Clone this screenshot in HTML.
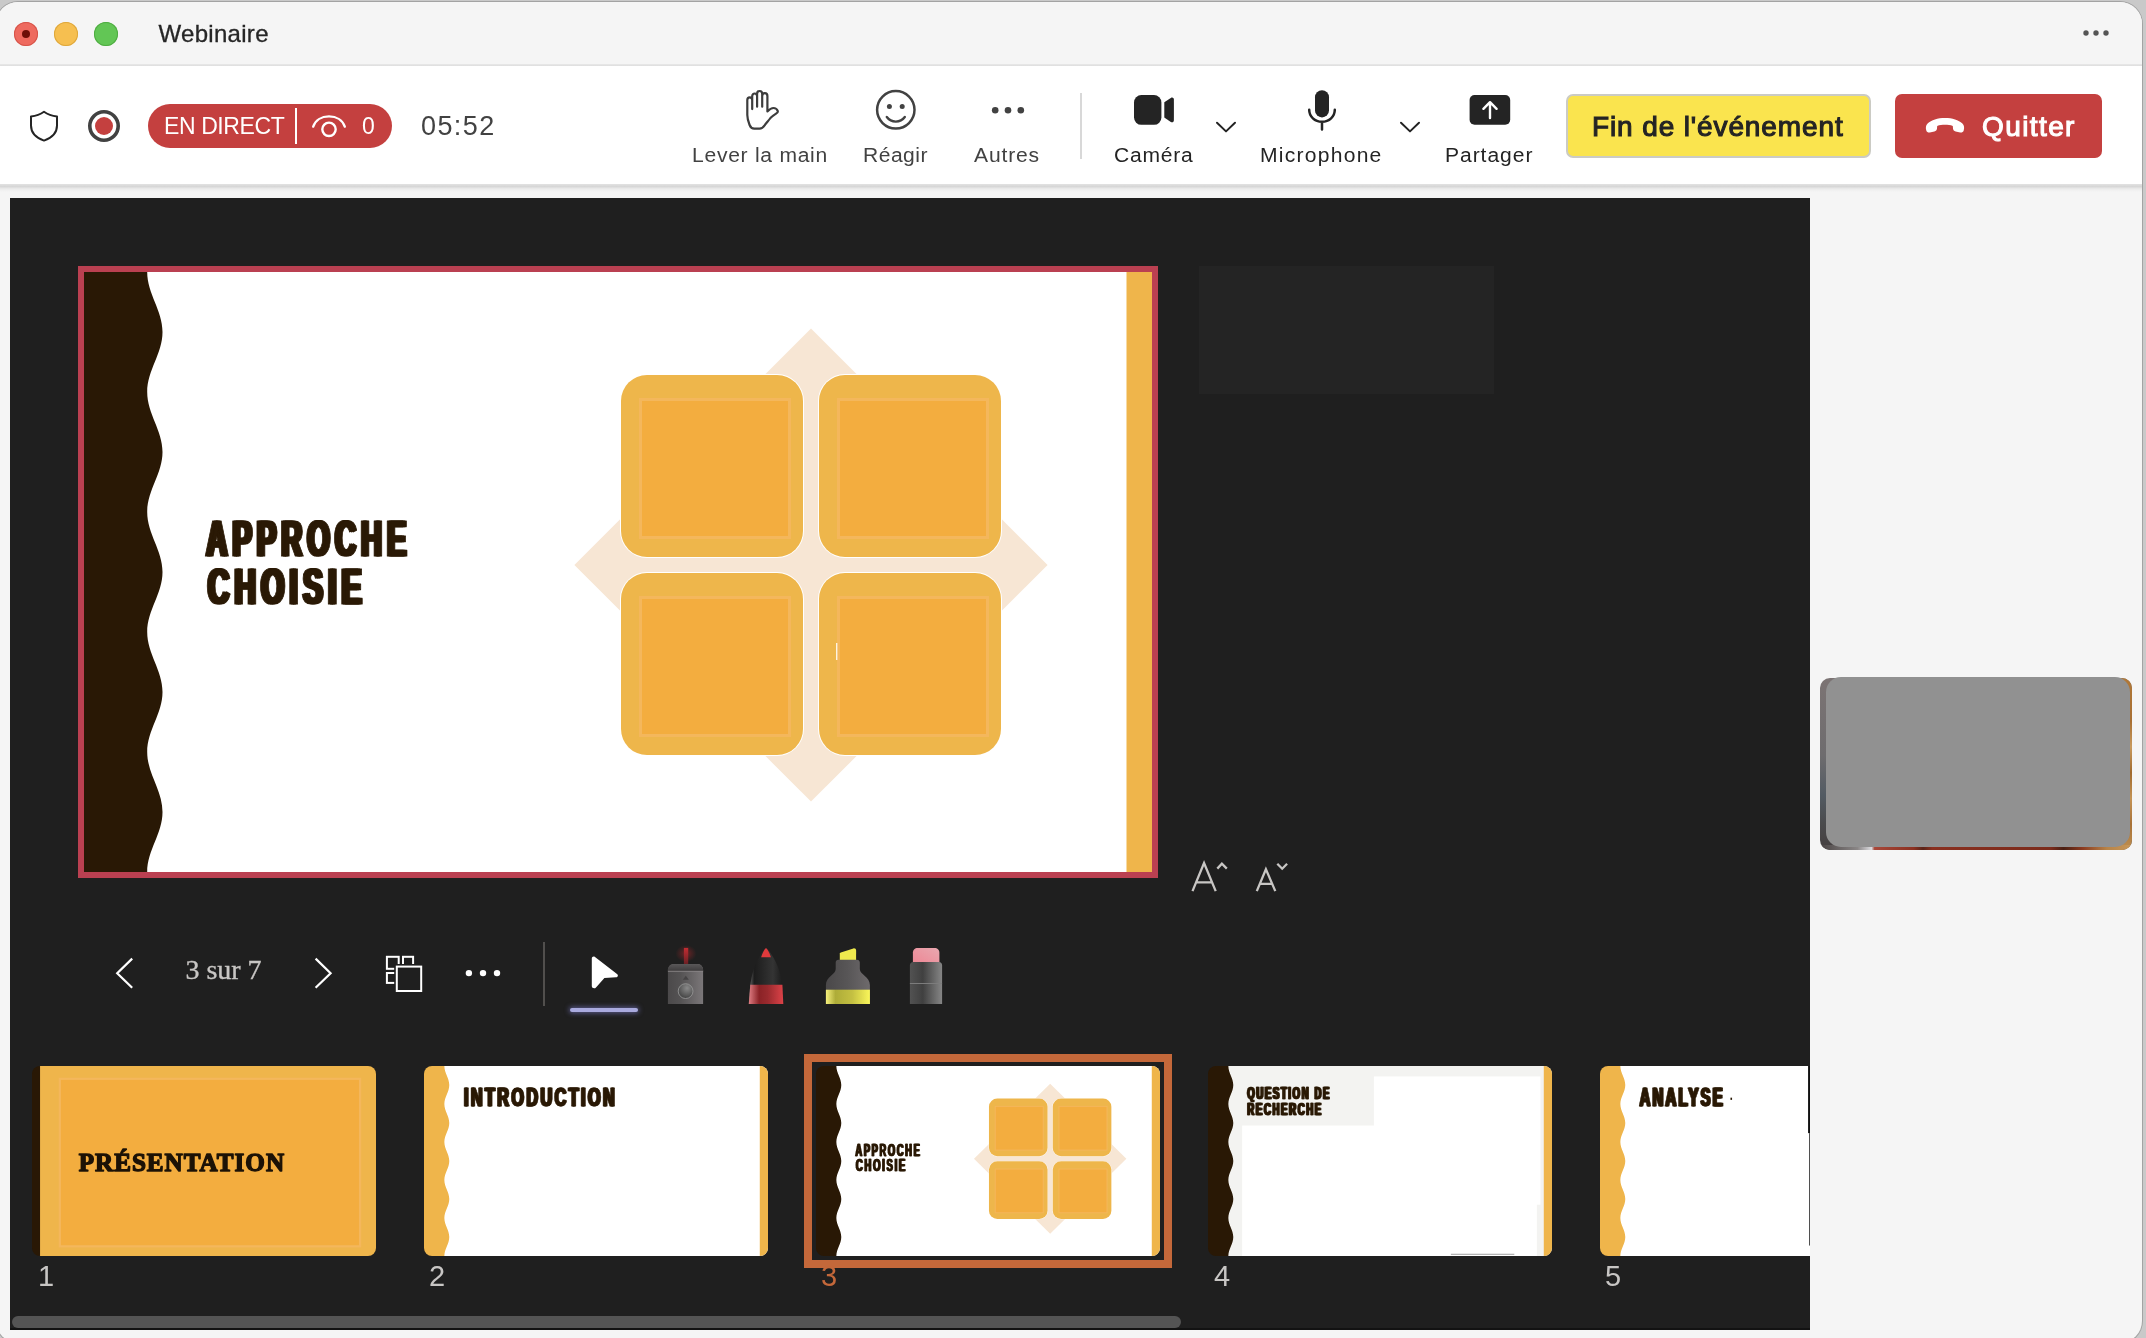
<!DOCTYPE html>
<html lang="fr">
<head>
<meta charset="utf-8">
<title>Webinaire</title>
<style>
*{box-sizing:border-box;margin:0;padding:0}
html,body{width:2146px;height:1338px;overflow:hidden;background:#c9c9c9}
body{font-family:"Liberation Sans",sans-serif;position:relative}
.abs{position:absolute}
#win{position:absolute;left:-4px;top:2px;width:2146px;height:1341px;background:#f5f5f5;border-radius:22px;overflow:hidden;box-shadow:0 0 0 1px #a3a3a3;will-change:transform}
#wi{position:absolute;left:4px;top:0;width:2142px;height:1341px}
/* coordinates inside #win are page y - 2 */
#titlebar{position:absolute;left:0;top:0;width:2142px;height:62px;background:#f5f5f5}
#tbsep{position:absolute;left:0;top:62px;width:2142px;height:2px;background:linear-gradient(#e9e9e9,#dedede)}
.tl{position:absolute;top:20px;width:24px;height:24px;border-radius:50%}
#title{position:absolute;left:158.5px;top:18px;font-size:24px;line-height:28px;color:#262626;letter-spacing:.3px;-webkit-text-stroke:.3px #262626;white-space:nowrap}
#toolbar{position:absolute;left:0;top:64px;width:2142px;height:118px;background:#fff}
#tbsh{position:absolute;left:0;top:182px;width:2142px;height:8px;background:linear-gradient(#e2e2e2 0,#dadada 22%,#d5d5d5 36%,#e2e2e2 46%,#ebebeb 62%,#f1f1f1 82%,#f5f5f5 100%)}
.lbl{position:absolute;top:141px;font-size:19.5px;line-height:24px;color:#424242;white-space:nowrap;transform-origin:0 50%;transform:scaleX(1.08)}
.lbl.dk{color:#242424}
#stage{position:absolute;left:10px;top:196px;width:1800px;height:1132px;background:#1f1f1f;overflow:hidden}
#si{position:absolute;left:0;top:-1px;width:1800px;height:1133px}
/* coordinates inside #stage are page x-10, page y-197 */
.num{position:absolute;top:1063px;font-size:29px;line-height:32px;color:#c8c6c4}
.thumb{position:absolute;top:869px;width:344px;height:190px;border-radius:8px;overflow:hidden}
.ico{position:absolute;overflow:visible}
</style>
</head>
<body>
<div id="win"><div id="wi">
  <div id="titlebar">
    <div class="tl" style="left:14px;background:#ee6a5f;box-shadow:inset 0 0 0 1px #d5544a"></div>
    <div class="abs" style="left:22px;top:28px;width:8px;height:8px;border-radius:50%;background:#6d0f08"></div>
    <div class="tl" style="left:54px;background:#f6bf50;box-shadow:inset 0 0 0 1px #dea73c"></div>
    <div class="tl" style="left:94px;background:#62c655;box-shadow:inset 0 0 0 1px #4fac42"></div>
    <div id="title">Webinaire</div>
    <svg class="ico" style="left:2078px;top:26px" width="36" height="10" viewBox="0 0 36 10"><circle cx="8" cy="5" r="2.7" fill="#555"/><circle cx="18" cy="5" r="2.7" fill="#555"/><circle cx="28" cy="5" r="2.7" fill="#555"/></svg>
  </div>
  <div id="tbsep"></div>
  <div id="toolbar"></div>
  <div id="tbsh"></div>
  <!--TB-START-->
  <!-- shield -->
  <svg class="ico" style="left:28px;top:106px" width="32" height="36" viewBox="0 0 32 36"><path d="M16 3.8 C12.2 6.6 7.8 8 3 8.4 V17.6 C3 24.8 8.2 30 16 32.6 C23.8 30 29 24.8 29 17.6 V8.4 C24.2 8 19.8 6.6 16 3.8 Z" fill="none" stroke="#242424" stroke-width="2" stroke-linejoin="round"/></svg>
  <!-- record -->
  <svg class="ico" style="left:86px;top:106px" width="36" height="36" viewBox="0 0 36 36"><circle cx="18" cy="18" r="14.2" fill="none" stroke="#424242" stroke-width="3.6"/><circle cx="18" cy="18" r="9" fill="#c4403f"/></svg>
  <!-- live pill -->
  <div class="abs" style="left:148px;top:102px;width:244px;height:44px;border-radius:22px;background:#c4403f"></div>
  <div class="abs" id="endirect" style="left:164px;top:110px;font-size:23px;line-height:28px;color:#fff;white-space:nowrap;letter-spacing:-.4px">EN DIRECT</div>
  <div class="abs" style="left:295px;top:106px;width:2px;height:36px;background:#fff"></div>
  <svg class="ico" style="left:310px;top:110px" width="38" height="28" viewBox="0 0 38 28"><path d="M3.2 14.6 C5.4 8.4 11.4 4.4 19 4.4 C26.6 4.4 32.6 8.4 34.8 14.6" fill="none" stroke="#fff" stroke-width="2.4" stroke-linecap="round"/><circle cx="19" cy="17.3" r="6.7" fill="none" stroke="#fff" stroke-width="2.4"/></svg>
  <div class="abs" id="viewers" style="left:362px;top:110px;font-size:23px;line-height:28px;color:#fff">0</div>
  <div class="abs" id="timer" style="left:421px;top:108px;font-size:27px;line-height:32px;color:#424242;white-space:nowrap;letter-spacing:1.4px">05:52</div>

  <!-- raise hand -->
  <svg class="ico" style="left:740px;top:84px" width="44" height="48" viewBox="0 0 44 48"><path d="M7.3 29 V14 C7.3 12.4 8.4 11.3 9.75 11.3 C11.1 11.3 12.2 12.4 12.2 14 V23.1 M12.2 14 V10.2 C12.2 8.6 13.3 7.5 14.65 7.5 C16 7.5 17.1 8.6 17.1 10.2 V20.7 M17.1 10.2 V7.7 C17.1 6.1 18.2 5 19.65 5 C21.1 5 22.2 6.1 22.2 7.7 V20.7 M22.2 10 C22.2 8.4 23.3 7.2 24.8 7.2 C26.3 7.2 27.4 8.4 27.4 10 V25.4 C29.6 23.2 31.4 22 33.4 22 C35.4 22 37 23 37.7 24.8 C38.2 26.2 37.4 26.8 36.4 27.4 C34 29 32 30.4 30.4 32.1 C28 35 26.4 37.2 25 38.8 C23.6 40.8 22.4 42.7 19.6 42.7 H14.2 C11.8 42.7 10.4 41 9.6 39 C8.4 36 7.3 33 7.3 29" fill="none" stroke="#3d3d3d" stroke-width="2.2" stroke-linecap="round" stroke-linejoin="round"/></svg>
  <div class="lbl" id="l1" style="left:692px;letter-spacing:0.68px">Lever la main</div>
  <!-- react -->
  <svg class="ico" style="left:873px;top:85px" width="46" height="46" viewBox="0 0 46 46"><circle cx="22.8" cy="22.8" r="18.7" fill="none" stroke="#424242" stroke-width="2.5"/><circle cx="16.4" cy="19.4" r="2.5" fill="#424242"/><circle cx="29.2" cy="19.4" r="2.5" fill="#424242"/><path d="M13.8 30 C16 33 19 34.6 22.8 34.6 C26.6 34.6 29.6 33 31.8 30" fill="none" stroke="#424242" stroke-width="2.4" stroke-linecap="round"/></svg>
  <div class="lbl" id="l2" style="left:863px;letter-spacing:0.46px">Réagir</div>
  <!-- more -->
  <svg class="ico" style="left:988px;top:101px" width="40" height="12" viewBox="0 0 40 12"><circle cx="7.2" cy="7.2" r="3.3" fill="#424242"/><circle cx="20" cy="7.2" r="3.3" fill="#424242"/><circle cx="32.8" cy="7.2" r="3.3" fill="#424242"/></svg>
  <div class="lbl" id="l3" style="left:974px;letter-spacing:0.79px">Autres</div>
  <!-- divider -->
  <div class="abs" style="left:1080px;top:91px;width:2px;height:66px;background:#d8d8d8"></div>
  <!-- camera -->
  <svg class="ico" style="left:1132px;top:91px" width="46" height="34" viewBox="0 0 46 34"><rect x="2" y="2" width="27.4" height="29.8" rx="7.4" fill="#242424"/><path d="M32.3 9.2 L38.8 4.9 C40.4 3.9 41.9 4.9 41.9 6.6 V27.2 C41.9 28.9 40.4 29.9 38.8 28.9 L32.3 24.6 Z" fill="#242424"/></svg>
  <div class="lbl dk" id="l4" style="left:1114px;letter-spacing:0.71px">Caméra</div>
  <svg class="ico" style="left:1214px;top:118px" width="24" height="14" viewBox="0 0 24 14"><path d="M3 2.8 L12 11.4 L21 2.8" fill="none" stroke="#242424" stroke-width="2" stroke-linecap="round" stroke-linejoin="round"/></svg>
  <!-- mic -->
  <svg class="ico" style="left:1304px;top:85px" width="36" height="46" viewBox="0 0 36 46"><rect x="11" y="3.2" width="14" height="27.2" rx="7" fill="#242424"/><path d="M5.2 22.8 C5.2 29.6 10.8 34.7 18 34.7 C25.2 34.7 30.8 29.6 30.8 22.8 M18 34.7 V42.4" fill="none" stroke="#242424" stroke-width="2.5" stroke-linecap="round"/></svg>
  <div class="lbl dk" id="l5" style="left:1260px;letter-spacing:1.16px">Microphone</div>
  <svg class="ico" style="left:1398px;top:118px" width="24" height="14" viewBox="0 0 24 14"><path d="M3 2.8 L12 11.4 L21 2.8" fill="none" stroke="#242424" stroke-width="2" stroke-linecap="round" stroke-linejoin="round"/></svg>
  <!-- share -->
  <svg class="ico" style="left:1468px;top:91px" width="44" height="34" viewBox="0 0 44 34"><rect x="1.6" y="2" width="40.6" height="29.8" rx="5" fill="#242424"/><path d="M22 25 V9.6 M15.4 15.8 L22 9.2 L28.6 15.8" fill="none" stroke="#fff" stroke-width="2.4" stroke-linecap="round" stroke-linejoin="round"/></svg>
  <div class="lbl dk" id="l6" style="left:1445px;letter-spacing:0.88px">Partager</div>
  <!-- end event -->
  <div class="abs" style="left:1566px;top:92px;width:305px;height:64px;border-radius:7px;background:#fae44e;border:2px solid #cbcbc4"></div>
  <div class="abs" id="fin" style="left:1592px;top:109px;font-size:28px;line-height:32px;color:#242424;white-space:nowrap;-webkit-text-stroke:1.1px #242424;letter-spacing:.88px">Fin de l'événement</div>
  <!-- leave -->
  <div class="abs" style="left:1895px;top:92px;width:207px;height:64px;border-radius:7px;background:#c4403f"></div>
  <svg class="ico" style="left:1924px;top:113px" width="42" height="22" viewBox="0 0 42 22"><path d="M21 3 C13.6 3 7.4 4.9 3.6 8.6 C1.7 10.5 1.5 13.1 2.3 15.4 C2.8 16.9 4.2 17.8 5.8 17.5 L10.4 16.6 C11.9 16.3 12.9 15.1 13 13.6 L13.2 10.9 C15.6 10.1 18.2 9.8 21 9.8 C23.8 9.8 26.4 10.1 28.8 10.9 L29 13.6 C29.1 15.1 30.1 16.3 31.6 16.6 L36.2 17.5 C37.8 17.8 39.2 16.9 39.7 15.4 C40.5 13.1 40.3 10.5 38.4 8.6 C34.6 4.9 28.4 3 21 3 Z" fill="#fff"/></svg>
  <div class="abs" id="quit" style="left:1982px;top:109px;font-size:28px;line-height:32px;color:#fff;white-space:nowrap;-webkit-text-stroke:1.1px #fff;letter-spacing:1.4px">Quitter</div>
  <!--TB-END-->
  <div id="stage"><div id="si">
    <svg width="0" height="0" style="position:absolute">
      <defs>
        <path id="wave" d="M0 0 H63.20 C63.20 21.85 78.50 38.15 78.50 60.00 C78.50 81.85 63.20 98.15 63.20 120.00 C63.20 141.85 78.50 158.15 78.50 180.00 C78.50 201.85 63.20 218.15 63.20 240.00 C63.20 261.85 78.50 278.15 78.50 300.00 C78.50 321.85 63.20 338.15 63.20 360.00 C63.20 381.85 78.50 398.15 78.50 420.00 C78.50 441.85 63.20 458.15 63.20 480.00 C63.20 501.85 78.50 518.15 78.50 540.00 C78.50 561.85 63.20 578.15 63.20 600.00 H0 Z"/>
        <g id="sq">
          <rect x="0" y="0" width="184" height="184" rx="27" fill="#fff"/>
          <rect x="1" y="1" width="182" height="182" rx="26" fill="#eeb64b"/>
          <rect x="19" y="24" width="152" height="141" fill="#f4b75c"/>
          <rect x="22" y="27" width="146" height="135" fill="#f3ad3f"/>
        </g>
        <g id="quad">
          <path d="M727 56.4 L963.6 293 L727 529.6 L490.4 293 Z" fill="#f7e6d4"/>
          <use href="#sq" x="536" y="102"/>
          <use href="#sq" x="734" y="102"/>
          <use href="#sq" x="536" y="300"/>
          <use href="#sq" x="734" y="300"/>
        </g>
        <g id="slide3">
          <rect x="60" width="1008" height="600" fill="#fff"/>
          <use href="#wave" fill="#291805"/>
          <rect x="1042.5" width="25.5" height="600" fill="#efb54b"/>
          <use href="#quad"/>
          <g id="t3" font-family="Liberation Sans, sans-serif" font-weight="bold" font-size="49.4" fill="#2a1905" stroke="#2a1905" stroke-width="1.2" stroke-linejoin="round">
            <text transform="translate(122.4,284) scale(.588,1)" letter-spacing="8.6">APPROCHE</text>
            <text transform="translate(123.7,331.6) scale(.604,1)" letter-spacing="8.6">CHOISIE</text>
          </g>
          <use href="#t3" x="-1.8"/><use href="#t3" x="1.8"/>
        </g>
      </defs>
    </svg>
    <!-- main slide -->
    <div class="abs" style="left:68px;top:69px;width:1080px;height:612px;background:#ba4051"></div>
    <svg class="abs" style="left:74px;top:75px" width="1068" height="600" viewBox="0 0 1068 600"><use href="#slide3"/><rect x="752" y="371" width="1.4" height="17" fill="#fdf3e2"/></svg>
    <!-- notes box -->
    <div class="abs" style="left:1189px;top:69px;width:295px;height:128px;background:#242424"></div>
    <!-- font size icons -->
    <!-- slide controls -->
    <svg class="abs" style="left:1178px;top:660px" width="104" height="40" viewBox="0 0 104 40">
      <g fill="none" stroke="#c8c6c4" stroke-width="2.3" stroke-linejoin="miter">
        <path d="M4.5 34.1 L16.05 6 L27.7 34.1 M8.6 25.3 H23.6"/>
        <path d="M29.3 11.6 L33.9 6.6 L38.8 11.6"/>
        <path d="M68.8 34.1 L77.9 12.2 L87.3 34.1 M72 26.9 H84"/>
        <path d="M89.3 6.7 L94.2 11.7 L99.1 6.7"/>
      </g>
    </svg>
    <!-- prev / next -->
    <svg class="abs" style="left:100px;top:756px" width="40" height="40" viewBox="0 0 40 40"><path d="M22.2 5.6 L7.2 20.2 L22.2 34.8" fill="none" stroke="#fff" stroke-width="2.2"/></svg>
    <div class="abs" id="pager" style="left:175.4px;top:756px;font-family:'Liberation Serif',serif;font-size:28px;line-height:34px;color:#c8c6c4;white-space:nowrap;-webkit-text-stroke:.35px #c8c6c4">3 sur 7</div>
    <svg class="abs" style="left:300px;top:756px" width="40" height="40" viewBox="0 0 40 40"><path d="M5.6 5.6 L20.6 20.2 L5.6 34.8" fill="none" stroke="#fff" stroke-width="2.2"/></svg>
    <!-- grid view -->
    <svg class="abs" style="left:374px;top:758px" width="42" height="42" viewBox="0 0 42 42"><g fill="none" stroke="#fff" stroke-width="2"><rect x="2.9" y="1.8" width="11.8" height="12"/><rect x="19" y="1.8" width="10.1" height="12"/><rect x="2.9" y="18" width="12" height="9.9"/></g><rect x="10.2" y="9" width="29.6" height="29.6" fill="#1f1f1f"/><rect x="12.8" y="11.6" width="24.4" height="24.4" fill="none" stroke="#fff" stroke-width="2"/></svg>
    <svg class="abs" style="left:452px;top:768px" width="44" height="14" viewBox="0 0 44 14"><circle cx="6.9" cy="8.1" r="3.2" fill="#fff"/><circle cx="21" cy="8.1" r="3.2" fill="#fff"/><circle cx="35" cy="8.1" r="3.2" fill="#fff"/></svg>
    <div class="abs" style="left:533px;top:745px;width:2px;height:64px;background:#514f4d"></div>
    <!-- cursor -->
    <svg class="abs" style="left:578px;top:756px" width="36" height="40" viewBox="0 0 36 40"><path d="M3.8 5.6 C3.8 3.6 5.6 2.8 7 3.9 L29 21 C30.6 22.3 29.9 24.2 28 24.3 L16.4 25 L8 34.4 C6.6 36 3.8 35.2 3.8 33 Z" fill="#fff"/></svg>
    <div class="abs" style="left:560px;top:811px;width:68px;height:4px;border-radius:2px;background:#a9aade;box-shadow:0 0 5px 1px rgba(140,140,230,.55)"></div>
    <!-- laser -->
    <svg class="abs" style="left:654px;top:746px" width="44" height="62" viewBox="0 0 44 62">
      <defs><linearGradient id="lg1" x1="0" x2="1"><stop offset="0" stop-color="#4b494a"/><stop offset=".35" stop-color="#545253"/><stop offset="1" stop-color="#7b7779"/></linearGradient>
      <linearGradient id="lg1b" x1="0" y1="0" x2="0" y2="1"><stop offset="0" stop-color="#5a5859"/><stop offset="1" stop-color="#3e3c3d"/></linearGradient>
      <linearGradient id="lg1c" x1="0" y1="0" x2="0" y2="1"><stop offset="0" stop-color="#c22c32"/><stop offset="1" stop-color="#6a2024"/></linearGradient>
      <radialGradient id="lg1d" cx=".6" cy=".3" r=".8"><stop offset="0" stop-color="#8a8a8a"/><stop offset="1" stop-color="#3a3a3a"/></radialGradient>
      <radialGradient id="rg1"><stop offset="0" stop-color="#d02a2e" stop-opacity=".75"/><stop offset="1" stop-color="#d02a2e" stop-opacity="0"/></radialGradient></defs>
      <ellipse cx="22" cy="10.5" rx="10.5" ry="8.5" fill="url(#rg1)" opacity=".6"/>
      <rect x="19.9" y="4.9" width="4.3" height="16.4" fill="url(#lg1c)"/>
      <path d="M3.9 61 V27 C3.9 23.6 6.4 20.9 9.6 20.9 H33.4 C36.6 20.9 39.1 23.6 39.1 27 V61 Z" fill="url(#lg1)"/>
      <path d="M3.9 28 V27 C3.9 23.6 6.4 20.9 9.6 20.9 H33.4 C36.6 20.9 39.1 23.6 39.1 27 V28 Z" fill="url(#lg1b)"/>
      <rect x="3.9" y="27.8" width="35.2" height=".9" fill="#8a8788"/>
      <path d="M18.8 36.8 L21.8 32.8 L24.8 36.8 Z" fill="#454344"/>
      <circle cx="21.6" cy="48.1" r="7.4" fill="url(#lg1d)" stroke="#9a9a9a" stroke-width=".8"/>
    </svg>
    <!-- red pen -->
    <svg class="abs" style="left:736px;top:746px" width="40" height="62" viewBox="0 0 40 62">
      <defs><linearGradient id="lg2" x1="0" x2="1"><stop offset="0" stop-color="#6e6e6e"/><stop offset=".16" stop-color="#1c1c1c"/><stop offset=".7" stop-color="#343434"/><stop offset="1" stop-color="#1a1a1a"/></linearGradient>
      <linearGradient id="lg3" x1="0" x2="1"><stop offset="0" stop-color="#de7c82"/><stop offset=".3" stop-color="#8a2226"/><stop offset=".55" stop-color="#9a2a2e"/><stop offset="1" stop-color="#dc4248"/></linearGradient></defs>
      <path d="M20 4.9 C24.4 8 31.4 20 34.2 31 C35.6 36.6 36.4 41.8 36.4 41.8 L37.3 61 H2.8 L4.3 41.8 C4.3 41.8 5 36.6 6.4 31 C9.2 20 15.6 8 20 4.9 Z" fill="url(#lg2)"/>
      <path d="M20 4.9 C21.8 6.4 23.8 10.4 25 14.2 H15.1 C16.2 10.4 18.2 6.4 20 4.9 Z" fill="#e03a3c"/>
      <path d="M4.3 41.8 H36.4 L37.3 61 H2.8 Z" fill="url(#lg3)"/>
    </svg>
    <!-- highlighter -->
    <svg class="abs" style="left:812px;top:746px" width="52" height="62" viewBox="0 0 52 62">
      <defs><linearGradient id="lg4" x1="0" x2="1"><stop offset="0" stop-color="#4a4849"/><stop offset=".5" stop-color="#585657"/><stop offset="1" stop-color="#6e6a6c"/></linearGradient>
      <linearGradient id="lg4b" x1="0" x2="1"><stop offset="0" stop-color="#f6f07c"/><stop offset=".22" stop-color="#aeac38"/><stop offset=".6" stop-color="#c4c042"/><stop offset="1" stop-color="#faf65a"/></linearGradient></defs>
      <path d="M17.8 17 V10.6 C17.8 10 18.2 9.6 18.8 9.4 L31.4 5.4 C32.8 5 34.1 6 34.1 7.4 V17 Z" fill="#efea4e"/>
      <path d="M16.4 16.8 H35 C36.6 16.8 37.8 18 37.8 19.6 V26 C37.8 31.6 47.9 33.6 47.9 42 V61 H3.9 V42 C3.9 33.6 13.7 31.6 13.7 26 V19.6 C13.7 18 14.8 16.8 16.4 16.8 Z" fill="url(#lg4)"/>
      <rect x="3.9" y="46.7" width="44" height="14.3" fill="url(#lg4b)"/>
    </svg>
    <!-- eraser -->
    <svg class="abs" style="left:896px;top:746px" width="40" height="62" viewBox="0 0 40 62">
      <defs><linearGradient id="lg5" x1="0" x2="1"><stop offset="0" stop-color="#525252"/><stop offset=".4" stop-color="#404040"/><stop offset="1" stop-color="#868686"/></linearGradient>
      <linearGradient id="lg5b" x1="0" y1="1" x2="1" y2="0"><stop offset="0" stop-color="#ee8694"/><stop offset="1" stop-color="#e8a8b0"/></linearGradient></defs>
      <path d="M6.9 21 V9.6 C6.9 6.8 9 4.9 11.6 4.9 H28.7 C31.3 4.9 33.4 6.8 33.4 9.6 V21 Z" fill="url(#lg5b)"/>
      <path d="M3.9 61 V22.4 C3.9 20.4 5.2 19.1 7 19.1 H33 C34.8 19.1 36.1 20.4 36.1 22.4 V61 Z" fill="url(#lg5)"/>
      <rect x="3.9" y="40" width="32.2" height="1" fill="#7c7c7c"/>
    </svg>
    <div class="thumb" style="left:22px"><svg width="344" height="190" viewBox="0 0 1068 600" preserveAspectRatio="none" style="display:block">
      <rect x="24" width="1044" height="600" fill="#efb54b"/><rect width="25" height="600" fill="#291805"/>
      <rect x="83" y="37" width="939" height="536" fill="#f4b75c"/><rect x="90" y="44" width="925" height="522" fill="#f3ad3f"/>
      <g id="t1" font-family="Liberation Serif, serif" font-weight="bold" font-size="77" fill="#1c1206" stroke="#1c1206" stroke-width="4.2" stroke-linejoin="round"><text transform="translate(145,331) scale(1.014,1)" letter-spacing="3">PRÉSENTATION</text></g>
    </svg></div>
    <div class="thumb" style="left:414px"><svg width="344" height="190" viewBox="0 0 1068 600" preserveAspectRatio="none" style="display:block">
      <rect x="60" width="1008" height="600" fill="#fff"/><use href="#wave" fill="#efb54b"/><rect x="1042.5" width="25.5" height="600" fill="#efb54b"/>
      <g id="t2" font-family="Liberation Sans, sans-serif" font-weight="bold" font-size="80" fill="#2a1905" stroke="#2a1905" stroke-width="2.4" stroke-linejoin="round"><text transform="translate(124,125.4) scale(.628,1)" letter-spacing="12">INTRODUCTION</text></g><use href="#t2" x="-3"/><use href="#t2" x="3"/>
    </svg></div>
    <div class="abs" style="left:794px;top:857px;width:368px;height:214px;border:8px solid #c4683a"></div>
    <div class="thumb" style="left:806px"><svg width="344" height="190" viewBox="0 0 1068 600" preserveAspectRatio="none" style="display:block"><use href="#slide3"/></svg></div>
    <div class="thumb" style="left:1198px"><svg width="344" height="190" viewBox="0 0 1068 600" preserveAspectRatio="none" style="display:block">
      <rect x="60" width="1008" height="600" fill="#f3f3f1"/><use href="#wave" fill="#291805"/><rect x="1042.5" width="25.5" height="600" fill="#efb54b"/>
      <rect x="515" y="33" width="517" height="405" fill="#fff"/><rect x="106" y="188" width="915" height="412" fill="#fff"/>
      <rect x="754" y="593" width="197" height="3" fill="#9a9a9a"/>
      <g id="t4" font-family="Liberation Sans, sans-serif" font-weight="bold" font-size="55" fill="#2a1905" stroke="#2a1905" stroke-width="2" stroke-linejoin="round"><text transform="translate(122,105.4) scale(.544,1)" letter-spacing="9">QUESTION DE</text><text transform="translate(122,155) scale(.547,1)" letter-spacing="9">RECHERCHE</text></g><use href="#t4" x="-2.4"/><use href="#t4" x="2.4"/>
    </svg></div>
    <div class="thumb" style="left:1590px"><svg width="344" height="190" viewBox="0 0 1068 600" preserveAspectRatio="none" style="display:block">
      <rect x="60" width="1008" height="600" fill="#fff"/><use href="#wave" fill="#efb54b"/>
      <g id="t5" font-family="Liberation Sans, sans-serif" font-weight="bold" font-size="80" fill="#2a1905" stroke="#2a1905" stroke-width="2.4" stroke-linejoin="round"><text transform="translate(123,125) scale(.577,1)" letter-spacing="12">ANALYSE</text></g><use href="#t5" x="-3"/><use href="#t5" x="3"/>
      <rect x="405" y="100" width="5" height="7" fill="#2a1905"/>
      <rect x="646" y="0" width="8" height="212" fill="#111"/><rect x="649.5" y="212" width="4" height="355" fill="#222"/>
    </svg></div>
    <div class="num" style="left:28px">1</div>
    <div class="num" style="left:419px">2</div>
    <div class="num" style="left:811px;color:#c4683a">3</div>
    <div class="num" style="left:1204px">4</div>
    <div class="num" style="left:1595px">5</div>
    <!-- scrollbar -->
    <div class="abs" style="left:0;top:1131px;width:1800px;height:2px;background:#121212"></div>
    <div class="abs" style="left:2px;top:1119px;width:1169px;height:12px;border-radius:6px;background:#545454"></div>
  </div></div>
  <div class="abs" style="left:1820px;top:676px;width:312px;height:172px;border-radius:10px;overflow:hidden;background:linear-gradient(180deg,#7c7474 0%,#6e6c6e 45%,#535b63 68%,#4a4a4c 85%,#453f3f 100%)">
    <div class="abs" style="right:0;top:0;width:40px;height:172px;background:linear-gradient(180deg,#b07838 0%,#a87034 25%,#c89a5e 40%,#a06a2e 55%,#c49456 70%,#a87238 85%,#c09050 100%)"></div>
    <div class="abs" style="left:0;bottom:0;width:312px;height:5px;background:linear-gradient(90deg,#4a4444 0,#8a8686 12%,#dcdce0 16.5%,#a8483a 17.5%,#8c3222 30%,#5a2418 33%,#8a3020 36%,#7c2c1c 74%,#4a2014 78%,#8a3a20 84%,#b88448 92%,#c8985a 100%)"></div>
  </div>
  <div class="abs" style="left:1826px;top:675px;width:304px;height:170px;border-radius:15px;background:#919191"></div>
</div></div>
</body>
</html>
